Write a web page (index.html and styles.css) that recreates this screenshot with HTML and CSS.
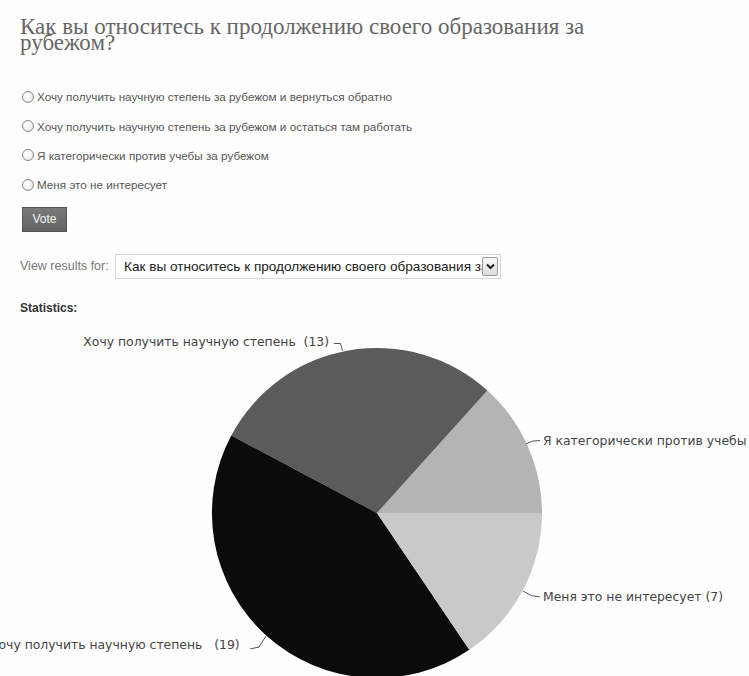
FILE: index.html
```html
<!DOCTYPE html>
<html lang="ru">
<head>
<meta charset="utf-8">
<title>Опрос</title>
<link rel="stylesheet" href="styles.css">
</head>
<body>
<main class="poll">
  <h1 class="poll-title">Как вы относитесь к продолжению своего образования за рубежом?</h1>

  <form class="poll-form">
    <ul class="options">
      <li class="option"><span class="radio"></span><span>Хочу получить научную степень за рубежом и вернуться обратно</span></li>
      <li class="option"><span class="radio"></span><span>Хочу получить научную степень за рубежом и остаться там работать</span></li>
      <li class="option"><span class="radio"></span><span>Я категорически против учебы за рубежом</span></li>
      <li class="option"><span class="radio"></span><span>Меня это не интересует</span></li>
    </ul>
    <button type="button" class="vote">Vote</button>
  </form>

  <div class="results-for">
    <span class="results-label">View results for:</span>
    <div class="select">
      <span class="select-text">Как вы относитесь к продолжению своего образования за рубежом?</span>
      <span class="select-arrow">
        <svg width="9" height="7" viewBox="0 0 9 7"><path d="M1 1.5 L4.5 5 L8 1.5" fill="none" stroke="#222" stroke-width="2"/></svg>
      </span>
    </div>
  </div>

  <h2 class="stats-title">Statistics:</h2>
</main>

<svg class="chart" width="749" height="360" viewBox="0 325 749 360">
  <!-- pie slices, centre 377,513, radius 165 -->
  <path d="M377,513 L542,513 A165,165 0 0 0 487.4,390.4 Z" fill="#b4b4b4"/>
  <path d="M377,513 L487.4,390.4 A165,165 0 0 0 231.3,435.5 Z" fill="#5b5b5b"/>
  <path d="M377,513 L231.3,435.5 A165,165 0 0 0 469.3,649.8 Z" fill="#0b0b0b"/>
  <path d="M377,513 L469.3,649.8 A165,165 0 0 0 542,513 Z" fill="#c9c9c9"/>

  <!-- leader lines -->
  <g fill="none" stroke="#555" stroke-width="1">
    <path d="M334,343.5 L340.5,343.5 L342.5,351"/>
    <path d="M526,444 Q532,440 540,440.5"/>
    <path d="M523,591 Q531,597 540,597"/>
    <path d="M250,649 L259,647 L266,636"/>
  </g>

  <g class="chart-labels">
    <text x="329" y="346" text-anchor="end">Хочу получить научную степень  (13)</text>
    <text x="543" y="445">Я категорически против учебы за рубежом  (6)</text>
    <text x="543" y="601">Меня это не интересует (7)</text>
    <text x="-10" y="649">Хочу получить научную степень   (19)</text>
  </g>
</svg>
</body>
</html>
```

FILE: styles.css
```css
html, body {
  margin: 0;
  padding: 0;
  background: #fefefe;
  overflow: hidden;
}

body {
  font-family: "Liberation Sans", Arial, sans-serif;
  color: #555;
}

.poll {
  padding: 0 20px;
}

.poll-title {
  margin: 19px 0 0;
  font-family: "Liberation Serif", "Times New Roman", serif;
  font-weight: normal;
  font-size: 23px;
  line-height: 16px;
  color: #666;
  max-width: 620px;
}

.poll-form {
  margin: 31px 0 0;
}

.options {
  list-style: none;
  margin: 0;
  padding: 0 0 0 2px;
}

.option {
  display: flex;
  align-items: center;
  height: 29.4px;
  font-size: 11.7px;
  color: #555;
}

.radio {
  box-sizing: border-box;
  width: 12px;
  height: 12px;
  margin-right: 3px;
  border: 1px solid #888;
  border-radius: 50%;
  background: radial-gradient(circle at 40% 35%, #fff 0%, #f2f2f2 55%, #d8d8d8 100%);
}

.vote {
  display: block;
  box-sizing: border-box;
  width: 45px;
  height: 25px;
  margin: 7px 0 0 2px;
  padding: 0;
  border: 1px solid #555;
  background: linear-gradient(#7a7a7a, #646464);
  color: #f4f4f4;
  font-family: "Liberation Sans", Arial, sans-serif;
  font-size: 12px;
}

.results-for {
  display: flex;
  align-items: center;
  margin-top: 22px;
}

.results-label {
  font-size: 12.5px;
  color: #777;
  width: 95px;
}

.select {
  box-sizing: border-box;
  display: flex;
  align-items: center;
  width: 386px;
  height: 25px;
  padding: 0 2px 0 8px;
  border: 1px solid #d4d4d4;
  background: #fff;
}

.select-text {
  flex: 1;
  overflow: hidden;
  white-space: nowrap;
  font-size: 13.6px;
  color: #222;
}

.select-arrow {
  box-sizing: border-box;
  display: flex;
  align-items: center;
  justify-content: center;
  width: 16px;
  height: 19px;
  border: 1px solid #9a9a9a;
  border-radius: 2px;
  background: linear-gradient(#fafafa, #dcdcdc);
}

.stats-title {
  margin: 22px 0 0;
  font-size: 12px;
  line-height: 15px;
  font-weight: bold;
  color: #333;
}

.chart {
  display: block;
  margin-top: 9px;
}

.chart-labels text {
  font-family: "DejaVu Sans", Verdana, sans-serif;
  font-size: 12.4px;
  fill: #444;
  white-space: pre;
}
```
